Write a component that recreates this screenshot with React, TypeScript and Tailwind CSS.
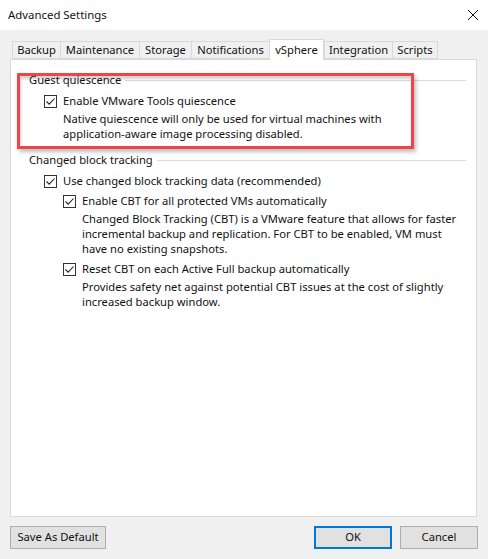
import React from 'react';

const tabs = [
  { label: 'Backup', w: 'w-[48px]' },
  { label: 'Maintenance', w: 'w-[79px]' },
  { label: 'Storage', w: 'w-[52px]' },
  { label: 'Notifications', w: 'w-[78px]' },
  { label: 'vSphere', w: 'w-[55px]', active: true },
  { label: 'Integration', w: 'w-[68px]' },
  { label: 'Scripts', w: 'w-[46px]' },
];

function Check() {
  return (
    <span className="w-[13px] h-[13px] shrink-0 border border-[#333] bg-white flex items-center justify-center">
      <svg width="11" height="11" viewBox="0 0 11 11">
        <path d="M1.5 5.5 L4.2 8.2 L9.5 2.5" fill="none" stroke="#222" strokeWidth="1.1" />
      </svg>
    </span>
  );
}

function GroupHeader({ title }: { title: string }) {
  return (
    <div className="flex items-center h-[16px] pr-[10px]">
      <span className="pl-[18px] pr-[4px] leading-[16px] whitespace-nowrap">{title}</span>
      <span className="flex-1 h-px bg-[#dcdcdc]" />
    </div>
  );
}

function Option({ label, lines }: { label: string; lines?: string[] }) {
  return (
    <div className="flex flex-col">
      <div className="flex items-center gap-[6px] h-[16px]">
        <Check />
        <span className="leading-[16px] whitespace-nowrap">{label}</span>
      </div>
      {lines && (
        <div className="pl-[19px] pt-[2px] leading-[15px]">
          {lines.map((l) => (
            <div key={l} className="whitespace-nowrap">{l}</div>
          ))}
        </div>
      )}
    </div>
  );
}

export default function App() {
  return (
    <div
      className="w-[488px] h-[559px] bg-[#f0f0f0] flex flex-col text-[11.2px] text-[#111] relative overflow-hidden"
      style={{ fontFamily: '"Noto Sans", "Open Sans", sans-serif' }}
    >
      {/* Title bar */}
      <div className="h-[30px] bg-white flex items-center justify-between pl-[8px] pr-[10px] shrink-0">
        <span className="text-[11.4px]">Advanced Settings</span>
        <svg width="10" height="10" viewBox="0 0 10 10">
          <path d="M0 0 L10 10 M10 0 L0 10" stroke="#111" strokeWidth="1" />
        </svg>
      </div>

      {/* Tabs */}
      <div className="flex items-end h-[29px] pl-[12px] shrink-0">
        {tabs.map((t) =>
          t.active ? (
            <div
              key={t.label}
              className={`${t.w} h-[21px] bg-white border border-[#d9d9d9] border-b-0 flex items-start justify-center pt-[2px] relative z-10 -mb-px`}
            >
              {t.label}
            </div>
          ) : (
            <div
              key={t.label}
              className={`${t.w} h-[18px] border border-[#d9d9d9] border-r-0 last:border-r flex items-center justify-center bg-[#f0f0f0]`}
            >
              {t.label}
            </div>
          )
        )}
      </div>

      {/* Panel */}
      <div className="ml-[10px] w-[467px] h-[458px] bg-white border border-[#d9d9d9] flex flex-col pt-[12px]">
        <GroupHeader title="Guest quiescence" />
        <div className="pl-[33px] pt-[5px]">
          <Option
            label="Enable VMware Tools quiescence"
            lines={[
              'Native quiescence will only be used for virtual machines with',
              'application-aware image processing disabled.',
            ]}
          />
        </div>

        <div className="pt-[11px]">
          <GroupHeader title="Changed block tracking" />
        </div>
        <div className="pl-[33px] pt-[5px] flex flex-col">
          <Option label="Use changed block tracking data (recommended)" />
          <div className="pl-[19px] pt-[4px] flex flex-col gap-[5px]">
            <Option
              label="Enable CBT for all protected VMs automatically"
              lines={[
                'Changed Block Tracking (CBT) is a VMware feature that allows for faster',
                'incremental backup and replication. For CBT to be enabled, VM must',
                'have no existing snapshots.',
              ]}
            />
            <Option
              label="Reset CBT on each Active Full backup automatically"
              lines={[
                'Provides safety net against potential CBT issues at the cost of slightly',
                'increased backup window.',
              ]}
            />
          </div>
        </div>
      </div>

      {/* Buttons */}
      <div className="flex items-center pl-[10px] pr-[10px] pt-[9px]">
        <button className="w-[96px] h-[23px] bg-[#e1e1e1] border border-[#adadad]">Save As Default</button>
        <div className="flex-1" />
        <button className="w-[78px] h-[23px] bg-[#e1e1e1] border-2 border-[#0078d7]">OK</button>
        <button className="w-[78px] h-[23px] bg-[#e1e1e1] border border-[#adadad] ml-[8px]">Cancel</button>
      </div>

      {/* Annotation highlight */}
      <div className="absolute left-[17px] top-[73px] w-[397px] h-[76px] border-[3px] border-[#ef4449] shadow-[2px_3px_4px_rgba(0,0,0,0.25),inset_1px_3px_3px_rgba(0,0,0,0.18)] pointer-events-none" />
    </div>
  );
}
